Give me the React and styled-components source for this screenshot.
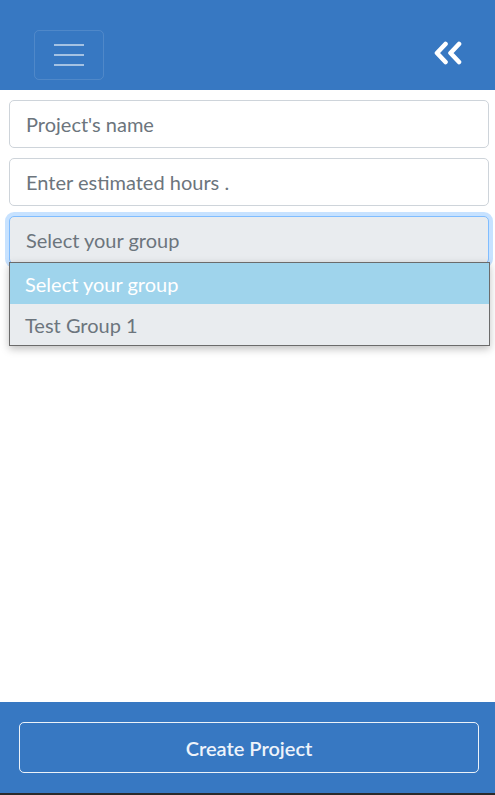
import React from 'react'
import styled, { createGlobalStyle } from 'styled-components'

const GlobalStyle = createGlobalStyle`
  html, body {
    margin: 0;
    padding: 0;
    background: #ffffff;
  }
  body {
    font-family: Lato, "Open Sans", "Liberation Sans", sans-serif;
  }
  * { box-sizing: border-box; }
`

const Page = styled.div`
  display: flex;
  flex-direction: column;
  height: 795px;
`

const Navbar = styled.header`
  height: 90px;
  background: #3778c2;
  display: flex;
  align-items: center;
  justify-content: space-between;
  padding: 19px 31px 0 34px;
  flex-shrink: 0;
`

const Toggler = styled.button`
  width: 70px;
  height: 50px;
  border: 1px solid rgba(255, 255, 255, 0.12);
  border-radius: 5px;
  background: transparent;
  display: flex;
  flex-direction: column;
  align-items: center;
  justify-content: center;
  gap: 8px;
  padding: 0;
`

const Bar = styled.span`
  display: block;
  width: 30px;
  height: 2px;
  background: rgba(255, 255, 255, 0.55);
`

const Collapse = styled.div`
  width: 30px;
  height: 24px;
  display: flex;
  align-items: center;
  margin-top: -3px;
`

const Main = styled.main`
  flex: 1;
  padding: 10px 6px 0 9px;
  display: flex;
  flex-direction: column;
  gap: 10px;
`

const Field = styled.div`
  height: 48px;
  border: 1px solid #ced4da;
  border-radius: 5px;
  background: ${p => (p.$focus ? '#e9ecef' : '#ffffff')};
  ${p => p.$focus && `
    border-color: #80bdff;
    box-shadow: 0 0 0 4px rgba(0, 123, 255, 0.22);
  `}
  display: flex;
  align-items: center;
  padding: 0 16px;
  font-size: 20px;
  color: #6c757d;
`

const SelectWrap = styled.div`
  position: relative;
`

const Menu = styled.ul`
  position: absolute;
  left: 0;
  right: -1px;
  top: 46px;
  margin: 0;
  padding: 0;
  list-style: none;
  border: 1px solid #6b6b6b;
  background: #e9ecef;
  box-shadow: 0 3px 8px rgba(0, 0, 0, 0.25);
  z-index: 2;
`

const Option = styled.li`
  height: 41px;
  display: flex;
  align-items: center;
  padding: 0 15px;
  font-size: 20px;
  background: ${p => (p.$active ? '#9fd4ec' : '#e9ecef')};
  color: ${p => (p.$active ? '#ffffff' : '#6c757d')};
`

const Footer = styled.footer`
  height: 93px;
  background: #3778c2;
  border-bottom: 2px solid #2a2a2a;
  padding: 20px 16px 0 19px;
  flex-shrink: 0;
`

const CreateButton = styled.button`
  width: 100%;
  height: 51px;
  background: transparent;
  border: 1px solid rgba(255, 255, 255, 0.9);
  border-radius: 5px;
  color: #eef3fa;
  font-family: Lato, "Open Sans", "Liberation Sans", sans-serif;
  font-size: 20px;
  font-weight: 600;
`

function DoubleLeft() {
  return (
    <svg width="30" height="24" viewBox="0 0 30 24">
      <g fill="none" stroke="#ffffff" strokeWidth="4.6" strokeLinecap="round" strokeLinejoin="round">
        <polyline points="11.5,3 3,12 11.5,21" />
        <polyline points="25,3 16.5,12 25,21" />
      </g>
    </svg>
  )
}

export default function App() {
  return (
    <Page>
      <GlobalStyle />
      <Navbar>
        <Toggler aria-label="menu">
          <Bar />
          <Bar />
          <Bar />
        </Toggler>
        <Collapse>
          <DoubleLeft />
        </Collapse>
      </Navbar>
      <Main>
        <Field>Project's name</Field>
        <Field>Enter estimated hours .</Field>
        <SelectWrap>
          <Field $focus>Select your group</Field>
          <Menu>
            <Option $active>Select your group</Option>
            <Option>Test Group 1</Option>
          </Menu>
        </SelectWrap>
      </Main>
      <Footer>
        <CreateButton>Create Project</CreateButton>
      </Footer>
    </Page>
  )
}
